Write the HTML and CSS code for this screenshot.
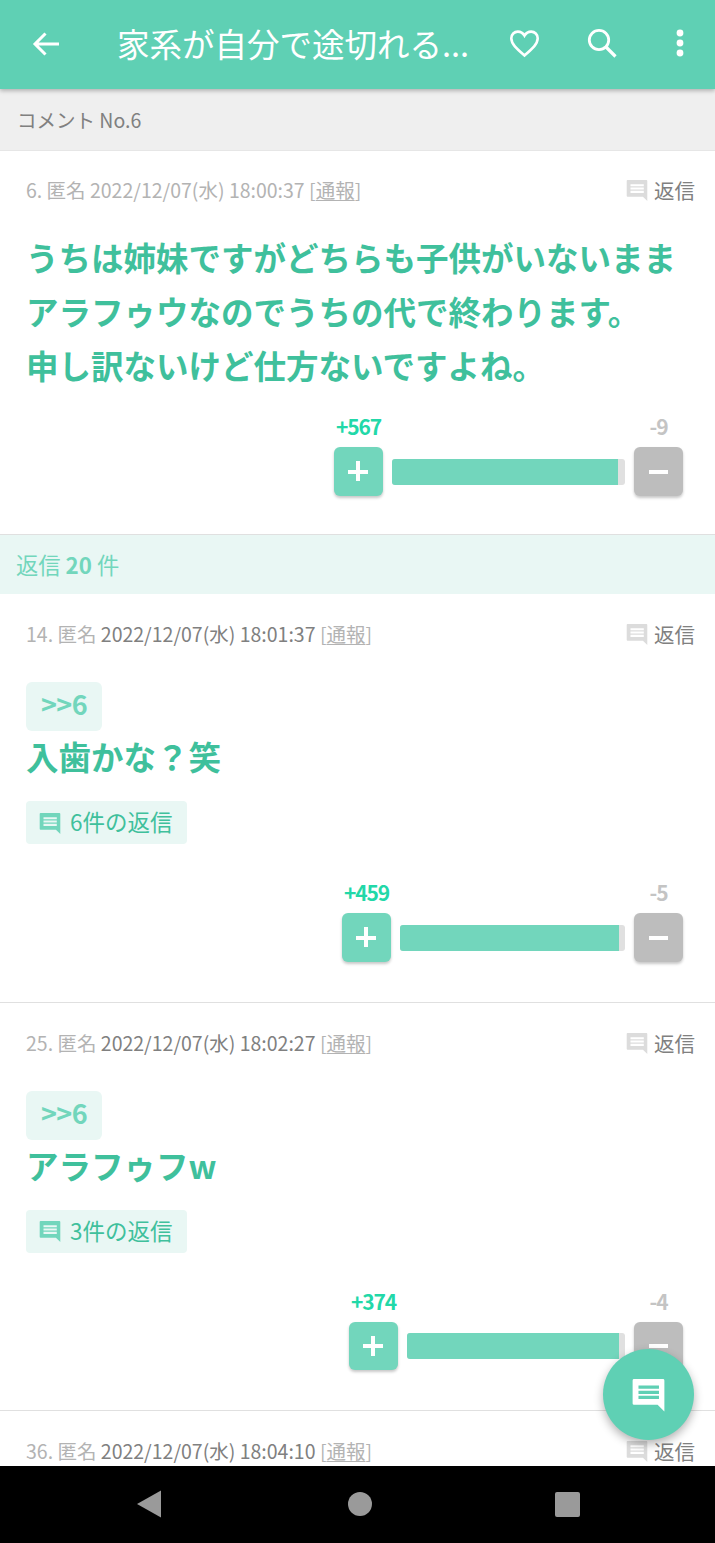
FILE: index.html
```html
<!DOCTYPE html>
<html lang="ja">
<head>
<meta charset="utf-8">
<title>コメント</title>
<link rel="stylesheet" href="styles.css">
</head>
<body>
<svg class="defs" width="0" height="0"><defs>
<symbol id="msg" viewBox="0 0 24 24"><path d="M2.600 2H21.400a.9.9 0 0 1 .9.9V23l-4.400-4.300H2.600a.9.9 0 0 1-.9-.9V2.900a.9.9 0 0 1 .9-.9z" fill="currentColor"/><path d="M5.500 6.200h13.300v2.100H5.500zM5.500 9.500h13.300v2.100H5.500zM5.500 12.800h13.300v2.100H5.500z" fill="var(--lines,#fff)"/></symbol>
</defs></svg>
<div class="screen">
  <header class="appbar">
    <button class="iconbtn back"><svg viewBox="0 0 32 32" width="32" height="32"><path d="M29 16H5M15.500 5.500 5 16 15.500 26.500" fill="none" stroke="#fff" stroke-width="3"/></svg></button>
    <h1 class="title">家系が自分で途切れる...</h1>
    <div class="actions">
      <svg viewBox="0 0 32 32" width="32" height="32"><path d="M16.500 28.500C8.500 21.500 3.300 17 3.300 11.300 3.300 7.500 6.300 4.600 9.800 4.600c2.700 0 5.200 1.500 6.700 4 1.500-2.500 4-4 6.700-4 3.500 0 6.500 2.900 6.500 6.700C29.700 17 24.500 21.500 16.500 28.500z" fill="none" stroke="#fff" stroke-width="2.600"/></svg>
      <svg class="a-search" viewBox="0 0 32 32" width="32" height="32"><circle cx="13" cy="13" r="9.700" fill="none" stroke="#fff" stroke-width="2.800"/><path d="M20 20 29.500 29.500" stroke="#fff" stroke-width="3.200"/></svg>
      <svg class="a-more" viewBox="0 0 8 32" width="8" height="32"><circle cx="4" cy="6" r="3.400" fill="#fff"/><circle cx="4" cy="16" r="3.400" fill="#fff"/><circle cx="4" cy="26" r="3.400" fill="#fff"/></svg>
    </div>
  </header>
  <main class="feed">
    <div class="crumb">コメント No.6</div>

    <article class="comment top">
      <div class="meta"><span class="info light">6. 匿名 2022/12/07(水) 18:00:37 [<u>通報</u>]</span><span class="reply"><svg class="ic"><use href="#msg"/></svg>返信</span></div>
      <p class="body big">うちは姉妹ですがどちらも子供がいないまま<br>アラフゥウなのでうちの代で終わります。<br>申し訳ないけど仕方ないですよね。</p>
      <div class="votes"><div class="vote"><span class="plus-n">+567</span><button class="vbtn plus"><i></i><i class="v"></i></button></div><div class="bar" style="width:233px"><div class="fill" style="width:97%"></div></div><div class="vote"><span class="minus-n">-9</span><button class="vbtn minus"><i></i></button></div></div>
    </article>

    <div class="replies">返信 <b>20</b> 件</div>

    <article class="comment">
      <div class="meta"><span class="info"><span class="light">14. 匿名</span> 2022/12/07(水) 18:01:37 <span class="light">[<u>通報</u>]</span></span><span class="reply"><svg class="ic"><use href="#msg"/></svg>返信</span></div>
      <a class="anchor">&gt;&gt;6</a>
      <p class="body">入歯かな？笑</p>
      <a class="thread"><svg class="ic2"><use href="#msg"/></svg>6件の返信</a>
      <div class="votes v2"><div class="vote"><span class="plus-n">+459</span><button class="vbtn plus"><i></i><i class="v"></i></button></div><div class="bar" style="width:225px"><div class="fill" style="width:97.300%"></div></div><div class="vote"><span class="minus-n">-5</span><button class="vbtn minus"><i></i></button></div></div>
    </article>

    <article class="comment">
      <div class="meta"><span class="info"><span class="light">25. 匿名</span> 2022/12/07(水) 18:02:27 <span class="light">[<u>通報</u>]</span></span><span class="reply"><svg class="ic"><use href="#msg"/></svg>返信</span></div>
      <a class="anchor">&gt;&gt;6</a>
      <p class="body">アラフゥフw</p>
      <a class="thread"><svg class="ic2"><use href="#msg"/></svg>3件の返信</a>
      <div class="votes v2"><div class="vote"><span class="plus-n">+374</span><button class="vbtn plus"><i></i><i class="v"></i></button></div><div class="bar" style="width:218px"><div class="fill" style="width:97.200%"></div></div><div class="vote"><span class="minus-n">-4</span><button class="vbtn minus"><i></i></button></div></div>
    </article>

    <article class="comment">
      <div class="meta"><span class="info"><span class="light">36. 匿名</span> 2022/12/07(水) 18:04:10 <span class="light">[<u>通報</u>]</span></span><span class="reply"><svg class="ic"><use href="#msg"/></svg>返信</span></div>
    </article>
  </main>
  <button class="fab"><svg class="fab-ic"><use href="#msg"/></svg></button>
  <nav class="sysnav">
    <svg viewBox="0 0 26 30" width="26" height="30"><path d="M25 1.500V28.500L1 15z" fill="#9a9a9a"/></svg>
    <span class="home"></span>
    <span class="recent"></span>
  </nav>
</div>
</body>
</html>
```
FILE: styles.css
```css
* { box-sizing: border-box; }
html, body { margin: 0; padding: 0; height: 100%; }
body { font-family: "Noto Sans CJK JP", "Noto Sans", sans-serif; background: #fff; }
.defs { position: absolute; }
.screen { position: relative; width: 715px; height: 1543px; display: flex; flex-direction: column; overflow: hidden; }

.appbar { position: relative; z-index: 2; flex: none; height: 89px; background: #5fd0b4; box-shadow: 0 2px 4px rgba(0,0,0,.25); display: flex; align-items: center; color: #fff; }
.iconbtn { border: 0; background: none; padding: 0; display: flex; margin-bottom: 2px; }
.back { margin-left: 30px; width: 32px; }
.title { margin: 0 0 4px 55px; width: 391px; font-size: 32.500px; font-weight: 400; line-height: 85px; white-space: nowrap; }
.actions { display: flex; align-items: center; margin-bottom: 4px; }
.a-search { margin-left: 46px; }
.a-more { margin-left: 58px; }

.feed { flex: 1; min-height: 0; overflow: hidden; }
.crumb { height: 62px; padding-left: 17px; background: #efefef; border-bottom: 1px solid #e6e6e6; color: #808080; font-size: 19.500px; line-height: 61px; }

.comment { height: 408.500px; padding: 22px 20px 0 26px; border-bottom: 1px solid #e0e0e0; }
.comment.top { height: 384px; padding-top: 21px; }
.meta { display: flex; justify-content: space-between; align-items: center; height: 36px; }
.info { color: #808080; font-size: 19.500px; line-height: 36px; white-space: nowrap; }
.light { color: #b3b3b3; }
.info u { text-underline-offset: 2px; }
.reply { display: flex; align-items: center; color: #808080; font-size: 20.500px; line-height: 36px; }
.ic { width: 24px; height: 24px; margin-right: 5px; color: #dcdcdc; --lines: #fff; }

.body { margin: -2px 0 0; color: #3fc09c; font-size: 32.500px; font-weight: 700; line-height: 54px; white-space: nowrap; }
.body.big { margin-top: 22px; }

.anchor { display: block; width: 76px; height: 49px; margin-top: 30px; background: #e9f7f4; border-radius: 6px; color: #72d6bc; font-size: 27px; font-weight: 700; letter-spacing: -.6px; line-height: 44px; text-align: center; }
.thread { display: inline-flex; align-items: center; height: 43px; margin-top: 18px; padding: 0 14px 3px 12px; background: #e9f7f4; border-radius: 4px; color: #3fc09c; font-size: 22.500px; }
.ic2 { width: 24px; height: 24px; margin-right: 8px; margin-top: 3px; color: #72d6bc; --lines: #e9f7f4; }

.votes { display: flex; justify-content: flex-end; align-items: flex-end; gap: 9px; margin: 17px 12px 0 0; }
.votes.v2 { margin-top: 31px; }
.vote { display: flex; flex-direction: column; align-items: center; width: 49px; }
.plus-n { color: #22d8a8; font-size: 21px; font-weight: 700; letter-spacing: -1.200px; line-height: 34px; padding-bottom: 4px; white-space: nowrap; }
.minus-n { color: #c4c4c4; font-size: 21px; font-weight: 700; letter-spacing: -1px; line-height: 34px; padding-bottom: 4px; }
.vbtn { position: relative; width: 49px; height: 48.500px; padding: 0; border: 0; border-radius: 6px; box-shadow: 0 2px 3px rgba(0,0,0,.22); }
.plus { background: #72d6bc; }
.minus { background: #bdbdbd; }
.vbtn i { position: absolute; left: 14px; top: 22.500px; width: 20px; height: 4px; background: #fff; }
.vbtn i.v { left: 22px; top: 14px; width: 4px; height: 20px; }
.minus i { left: 15px; width: 19px; }
.bar { height: 26px; margin-bottom: 11px; background: #e0e0e0; border-radius: 3px; overflow: hidden; }
.fill { height: 100%; background: #72d6bc; }

.replies { height: 59px; padding-left: 16px; background: #e9f7f4; color: #72d6bc; font-size: 22.300px; line-height: 59px; }
.replies b { font-weight: 700; }

.fab { position: absolute; z-index: 3; left: 603px; top: 1349px; width: 91px; height: 91px; padding: 0; border: 0; border-radius: 50%; background: #5fd0b4; box-shadow: 0 4px 10px rgba(0,0,0,.3); display: flex; align-items: center; justify-content: center; }
.fab-ic { width: 37px; height: 37px; color: #fff; --lines: #5fd0b4; }

.sysnav { flex: none; position: relative; z-index: 4; height: 77px; background: #000; display: flex; align-items: center; }
.sysnav svg { margin-left: 136px; margin-top: -1px; }
.home { width: 24px; height: 24px; margin-left: 186px; border-radius: 50%; background: #9a9a9a; margin-top: -1px; }
.recent { width: 25px; height: 25px; margin-left: 183px; border-radius: 2px; background: #9a9a9a; margin-top: -1px; }
```
